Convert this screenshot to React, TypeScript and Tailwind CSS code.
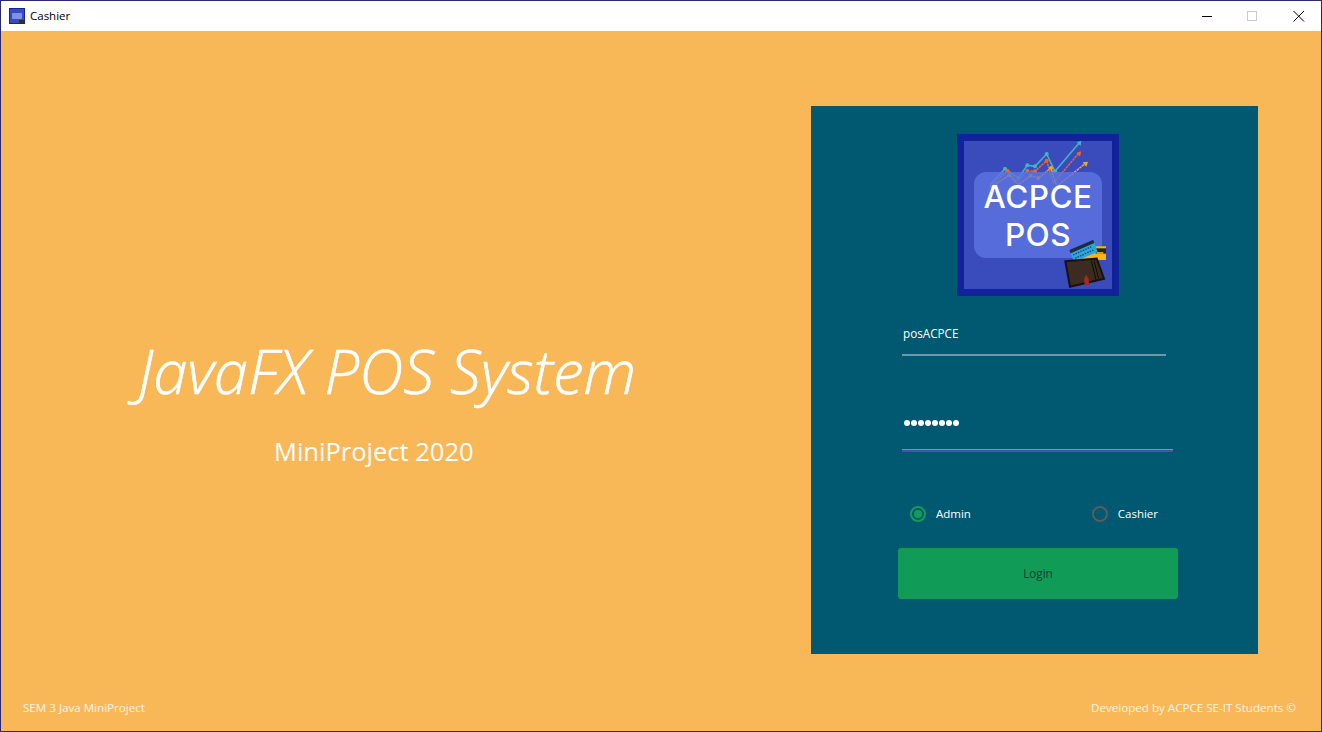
import React from "react";

function LogoArt() {
  return (
    <svg viewBox="0 0 525 525" className="absolute left-[-14px] top-[-13px] w-[175px] h-[175px]">
      <g fill="none" strokeWidth="4.5">
        <polyline points="120,170 165,122 205,150 232,112 255,115 290,78 315,130 388,44" stroke="#3fb6c4" />
        <polyline points="120,175 172,128 200,162 232,128 255,130 290,98 310,165 388,74" stroke="#e8662c" strokeDasharray="8 2" />
        <polyline points="120,178 178,142 205,170 242,143 265,150 303,120 320,175 408,105" stroke="#f2a52a" strokeDasharray="8 2" />
      </g>
      <g fill="#3fb6c4">
        <circle cx="165" cy="122" r="6" /><circle cx="205" cy="150" r="6" /><circle cx="232" cy="112" r="6" /><circle cx="255" cy="115" r="6" /><circle cx="290" cy="78" r="6" /><circle cx="315" cy="130" r="6" />
        <polygon points="394,38 380,43 392,54" />
      </g>
      <g fill="#e8662c">
        <circle cx="172" cy="128" r="6" /><circle cx="232" cy="128" r="6" /><circle cx="255" cy="130" r="6" /><circle cx="290" cy="98" r="6" />
        <polygon points="394,70 379,74 390,86" />
      </g>
      <g fill="#f2a52a">
        <circle cx="178" cy="142" r="6" /><circle cx="242" cy="143" r="6" /><circle cx="265" cy="150" r="6" /><circle cx="303" cy="120" r="6" />
        <polygon points="414,101 398,103 409,117" />
      </g>
      <rect x="72" y="132" width="384" height="258" rx="36" fill="#5d74e2" opacity="0.8" />
      <polygon points="390,396 438,355 468,355 468,396" fill="#f5b60d" />
      <rect x="437" y="361" width="31" height="16" fill="#2a2320" />
      <rect x="440" y="372" width="20" height="6" fill="#ee8a1c" />
      <polygon points="358,366 430,335 443,372 372,401" fill="#2ba6dd" />
      <polygon points="358,366 430,335 433,345 362,376" fill="#1f2a3c" />
      <g stroke="#1d4d78" strokeWidth="4" strokeDasharray="5 3">
        <line x1="369" y1="381" x2="424" y2="356" />
        <line x1="375" y1="391" x2="430" y2="366" />
      </g>
      <polygon points="346,400 440,392 462,452 360,476" fill="#3d2b22" stroke="#17120f" strokeWidth="6" />
      <g stroke="#0e0b0a" strokeWidth="3">
        <line x1="424" y1="398" x2="438" y2="455" />
        <line x1="432" y1="398" x2="446" y2="452" />
      </g>
      <polygon points="402,452 408,440 416,452 417,472 404,472" fill="#a8281e" />
    </svg>
  );
}

function Logo() {
  return (
    <div className="relative w-[162px] h-[162px] bg-[#3a4bbb] border-[7px] border-[#12229a] ml-[146px] overflow-visible">
      <LogoArt />
      <div className="relative flex flex-col items-center w-[148px] pt-[37px] text-white font-['Inter','Liberation_Sans',sans-serif] font-medium leading-[38px]">
        <span className="text-[31.5px] tracking-[0.5px]">ACPCE</span>
        <span className="text-[31.5px] tracking-[0.5px]">POS</span>
      </div>
    </div>
  );
}

function Radio({ label, checked }: { label: string; checked?: boolean }) {
  return (
    <div className="flex items-center gap-[10px]">
      <span
        className={
          checked
            ? "flex items-center justify-center w-4 h-4 rounded-full border-2 border-[#129c58]"
            : "flex items-center justify-center w-4 h-4 rounded-full border-2 border-[#5c5c5c]"
        }
      >
        {checked && <span className="w-2 h-2 rounded-full bg-[#129c58]" />}
      </span>
      <span className="text-[11.5px] leading-[15px] pb-px text-white">{label}</span>
    </div>
  );
}

export default function App() {
  return (
    <div className="w-[1322px] h-[732px] flex flex-col border border-[#2b2a6e] bg-[#f9b858] overflow-hidden font-['Open_Sans','Noto_Sans',sans-serif]">
      <div className="h-[30px] shrink-0 bg-white flex items-center pl-2 text-[11.5px] text-black">
        <div className="relative w-4 h-4 bg-[#3a4bbb] border border-[#12229a] flex flex-col items-center justify-center gap-[1px]">
          <span className="block w-[10px] h-[6px] bg-[#7e90e8] rounded-[1px]" />
          <span className="absolute right-0 bottom-0 w-[5px] h-[3px] bg-[#3d2b22]" />
        </div>
        <span className="ml-[5px]">Cashier</span>
        <div className="ml-auto flex items-center">
          <svg width="46" height="30" viewBox="0 0 46 30"><line x1="21" y1="15.5" x2="31" y2="15.5" stroke="#000" /></svg>
          <svg width="46" height="30" viewBox="0 0 46 30"><rect x="20.5" y="10.5" width="9" height="9" fill="none" stroke="#ccc" /></svg>
          <svg width="46" height="30" viewBox="0 0 46 30"><path d="M20.5 10 L31 20.5 M31 10 L20.5 20.5" stroke="#000" /></svg>
          <span className="w-[2px]" />
        </div>
      </div>

      <div className="flex-1 flex flex-col">
        <div className="flex pt-[75px]">
          <div className="w-[810px] shrink-0 flex flex-col items-start pt-[224px] text-white">
            <h1 className="ml-[137px] text-[61.5px] leading-[80px] italic font-light [-webkit-text-stroke:0.6px_white] whitespace-nowrap">JavaFX POS System</h1>
            <p className="ml-[273px] mt-[24px] text-[25.5px] leading-[34px] whitespace-nowrap">MiniProject 2020</p>
          </div>
          <div className="w-[447px] h-[548px] bg-[#005871] pt-[28px] flex flex-col">
            <Logo />
            <div className="ml-[91px] mt-[28px] w-[264px] h-[32px] border-b-2 border-[#6f98a6] pt-[1px] pl-[1px] text-[11.7px] leading-[16px] text-white">
              posACPCE
            </div>
            <div className="ml-[91px] mt-[53px] w-[271px] h-[41px] pl-[2px] pb-[13px] flex items-center gap-[1px] border-b border-[#6f98a6]">
              {[0, 1, 2, 3, 4, 5, 6, 7].map((i) => (
                <span key={i} className="w-[6px] h-[6px] rounded-full bg-white" />
              ))}
            </div>
            <div className="ml-[91px] w-[271px] h-[2px] bg-[#3f55ae]" />
            <div className="ml-[99px] mt-[54px] w-[248px] flex justify-between">
              <Radio label="Admin" checked />
              <Radio label="Cashier" />
            </div>
            <button className="ml-[87px] mt-[26px] w-[280px] h-[51px] rounded-[3px] bg-[#109c56] text-[11.7px] text-[#1d3a30]">
              Login
            </button>
          </div>
        </div>
        <div className="mt-auto flex justify-between pl-[22px] pr-[25px] pb-[15px] text-[11.6px] leading-4 text-[#fff4e2]">
          <span>SEM 3 Java MiniProject</span>
          <span>Developed by ACPCE SE-IT Students ©</span>
        </div>
      </div>
    </div>
  );
}
